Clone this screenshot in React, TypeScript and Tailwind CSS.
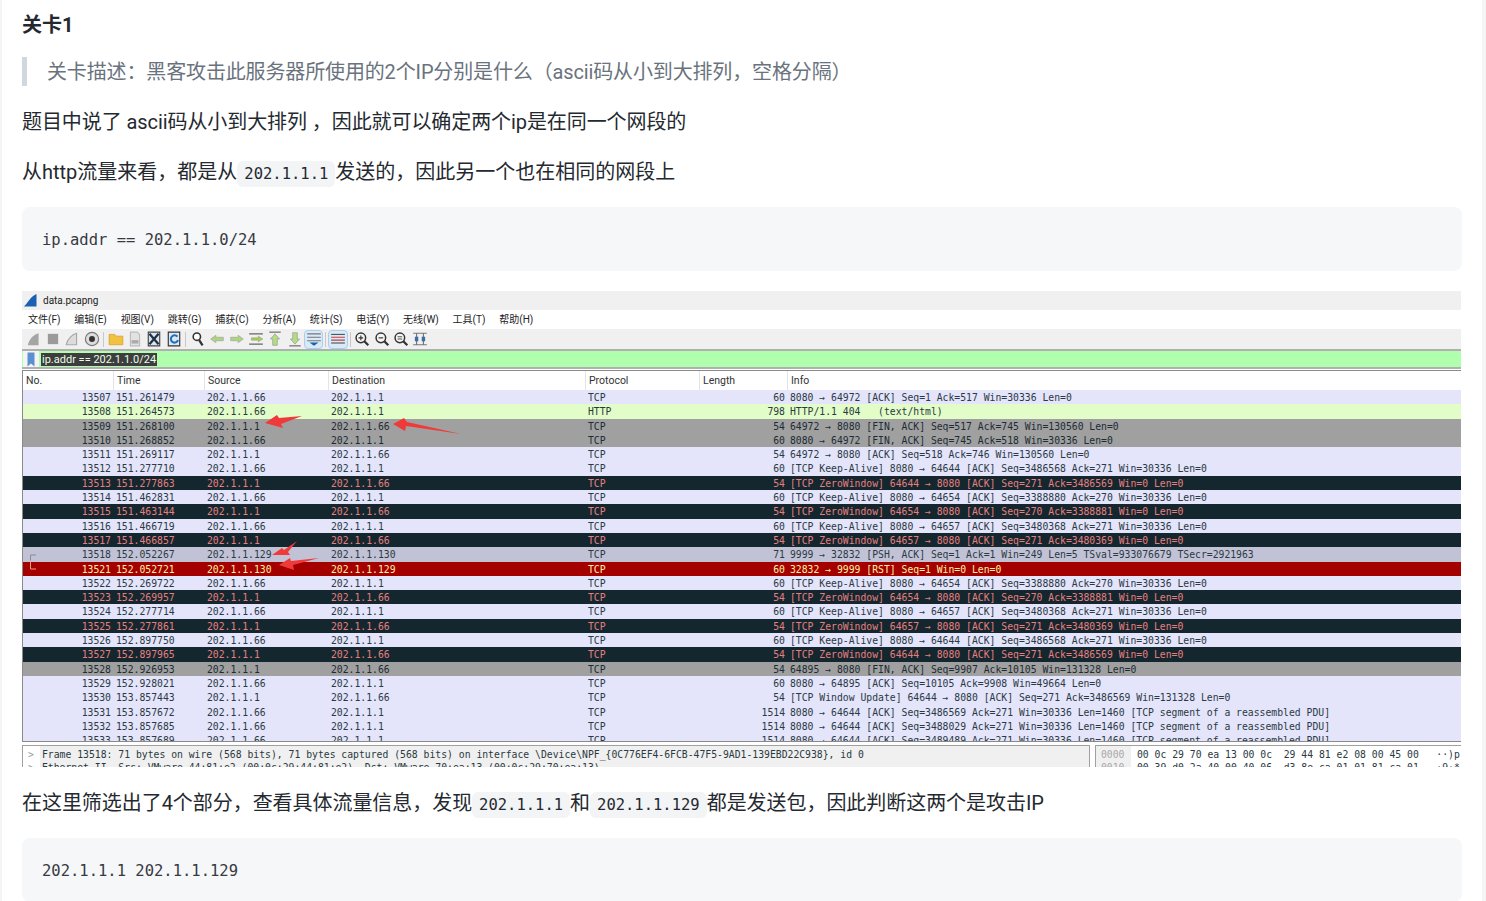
const cjk = "font-['Roboto','Noto_Sans_CJK_SC',sans-serif]";
const mono = "font-['DejaVu_Sans_Mono','Noto_Sans_CJK_SC',monospace]";

type RowKind = "tcp" | "http" | "fin" | "zero" | "sel" | "rst";
type Row = [number, string, string, string, string, number, string, RowKind];

const A = "202.1.1.66";
const B = "202.1.1.1";

const keep = (port: number, seq: number, ack: number) =>
  `[TCP Keep-Alive] 8080 → ${port} [ACK] Seq=${seq} Ack=${ack} Win=30336 Len=0`;
const zero = (port: number, seq: number, ack: number) =>
  `[TCP ZeroWindow] ${port} → 8080 [ACK] Seq=${seq} Ack=${ack} Win=0 Len=0`;
const seg = (seq: number) =>
  `8080 → 64644 [ACK] Seq=${seq} Ack=271 Win=30336 Len=1460 [TCP segment of a reassembled PDU]`;

const rows: Row[] = [
  [13507, "151.261479", A, B, "TCP", 60, "8080 → 64972 [ACK] Seq=1 Ack=517 Win=30336 Len=0", "tcp"],
  [13508, "151.264573", A, B, "HTTP", 798, "HTTP/1.1 404   (text/html)", "http"],
  [13509, "151.268100", B, A, "TCP", 54, "64972 → 8080 [FIN, ACK] Seq=517 Ack=745 Win=130560 Len=0", "fin"],
  [13510, "151.268852", A, B, "TCP", 60, "8080 → 64972 [FIN, ACK] Seq=745 Ack=518 Win=30336 Len=0", "fin"],
  [13511, "151.269117", B, A, "TCP", 54, "64972 → 8080 [ACK] Seq=518 Ack=746 Win=130560 Len=0", "tcp"],
  [13512, "151.277710", A, B, "TCP", 60, keep(64644, 3486568, 271), "tcp"],
  [13513, "151.277863", B, A, "TCP", 54, zero(64644, 271, 3486569), "zero"],
  [13514, "151.462831", A, B, "TCP", 60, keep(64654, 3388880, 270), "tcp"],
  [13515, "151.463144", B, A, "TCP", 54, zero(64654, 270, 3388881), "zero"],
  [13516, "151.466719", A, B, "TCP", 60, keep(64657, 3480368, 271), "tcp"],
  [13517, "151.466857", B, A, "TCP", 54, zero(64657, 271, 3480369), "zero"],
  [13518, "152.052267", "202.1.1.129", "202.1.1.130", "TCP", 71, "9999 → 32832 [PSH, ACK] Seq=1 Ack=1 Win=249 Len=5 TSval=933076679 TSecr=2921963", "sel"],
  [13521, "152.052721", "202.1.1.130", "202.1.1.129", "TCP", 60, "32832 → 9999 [RST] Seq=1 Win=0 Len=0", "rst"],
  [13522, "152.269722", A, B, "TCP", 60, keep(64654, 3388880, 270), "tcp"],
  [13523, "152.269957", B, A, "TCP", 54, zero(64654, 270, 3388881), "zero"],
  [13524, "152.277714", A, B, "TCP", 60, keep(64657, 3480368, 271), "tcp"],
  [13525, "152.277861", B, A, "TCP", 54, zero(64657, 271, 3480369), "zero"],
  [13526, "152.897750", A, B, "TCP", 60, keep(64644, 3486568, 271), "tcp"],
  [13527, "152.897965", B, A, "TCP", 54, zero(64644, 271, 3486569), "zero"],
  [13528, "152.926953", B, A, "TCP", 54, "64895 → 8080 [FIN, ACK] Seq=9907 Ack=10105 Win=131328 Len=0", "fin"],
  [13529, "152.928021", A, B, "TCP", 60, "8080 → 64895 [ACK] Seq=10105 Ack=9908 Win=49664 Len=0", "tcp"],
  [13530, "153.857443", B, A, "TCP", 54, "[TCP Window Update] 64644 → 8080 [ACK] Seq=271 Ack=3486569 Win=131328 Len=0", "tcp"],
  [13531, "153.857672", A, B, "TCP", 1514, seg(3486569), "tcp"],
  [13532, "153.857685", A, B, "TCP", 1514, seg(3488029), "tcp"],
  [13533, "153.857689", A, B, "TCP", 1514, seg(3489489), "tcp"],
];

const rowStyle: Record<RowKind, string> = {
  tcp: "bg-[#e4e4fb] text-[#2a3a42]",
  http: "bg-[#e2fdc8] text-[#2a3a42]",
  fin: "bg-[#a0a0a0] text-[#1c2c34]",
  zero: "bg-[#14272f] text-[#e77f7f]",
  sel: "bg-[#c2c2d6] text-[#2a3a42]",
  rst: "bg-[#a40000] text-[#fff3a0]",
};

const menus = ["文件(F)", "编辑(E)", "视图(V)", "跳转(G)", "捕获(C)", "分析(A)", "统计(S)", "电话(Y)", "无线(W)", "工具(T)", "帮助(H)"];

const InlineCode = ({ children }: { children: string }) => (
  <code className={`${mono} inline-block rounded-md bg-[#f3f4f6] px-[7px] text-[15.5px] leading-[26px] tracking-normal text-[#24292f]`}>
    {children}
  </code>
);

const CodeBlock = ({ children }: { children: string }) => (
  <pre className={`${mono} flex h-16 items-center rounded-lg bg-[#f6f7f9] px-5 pt-[3px] text-[15.5px] text-[#383a42]`}>{children}</pre>
);

const Icon = ({ children, active }: { children: React.ReactNode; active?: boolean }) => (
  <span className={`flex h-[19px] w-[19.3px] items-center justify-center ${active ? "rounded-sm border border-[#a6d0f0] bg-[#d8e9f7]" : ""}`}>
    <svg width="16" height="16" viewBox="0 0 14 14">{children}</svg>
  </span>
);

const Sep = () => <span className="mx-[2px] h-[15px] w-px bg-[#c8c8c8]" />;

const Toolbar = () => (
  <div className="flex h-5 items-center bg-[#f0f0f0] pl-[2px]">
    <Icon><path d="M1.5 12.5 C3 7 6 3.5 11 2 V12.5 Z" fill="#a5a5a5" /></Icon>
    <Icon><rect x="2.5" y="2.5" width="9" height="9" fill="#9a9a9a" /></Icon>
    <Icon><path d="M2 12 C3 7 7 3 11 2 V12 Z" fill="#dcdcdc" stroke="#a8a8a8" /></Icon>
    <Icon>
      <circle cx="7" cy="7" r="5.8" fill="#ddd" stroke="#777" />
      <circle cx="7" cy="7" r="2.6" fill="#333" />
    </Icon>
    <Sep />
    <Icon><path d="M1 3 H6 L7 4.5 H13 V12 H1 Z" fill="#f3c140" stroke="#d09a20" strokeWidth="0.6" /></Icon>
    <Icon>
      <path d="M3 1 H9 L11 3 V13 H3 Z" fill="#e2e2e2" stroke="#bbb" />
      <rect x="4" y="8" width="6" height="3" fill="#aaa" />
    </Icon>
    <Icon>
      <path d="M2 1 H12 V13 H2 Z" fill="#d9e4ee" stroke="#444" />
      <path d="M3 2.5 L11 11.5 M11 2.5 L3 11.5" stroke="#1c2f44" strokeWidth="2" />
    </Icon>
    <Icon>
      <path d="M2 1 H12 V13 H2 Z" fill="#dde8f3" stroke="#333" />
      <path d="M10 5 A3.2 3.2 0 1 0 10.5 8" fill="none" stroke="#1d6fc0" strokeWidth="1.8" />
    </Icon>
    <Sep />
    <Icon>
      <circle cx="6" cy="5" r="3.2" fill="#fff" stroke="#333" strokeWidth="1.4" />
      <path d="M8 8 L11 12.5" stroke="#333" strokeWidth="2" />
    </Icon>
    <Icon><path d="M1.5 7 L6 3.8 V5.5 H12.5 V8.5 H6 V10.2 Z" fill="#a8d878" stroke="#aaa" strokeWidth="0.7" /></Icon>
    <Icon><path d="M12.5 7 L8 3.8 V5.5 H1.5 V8.5 H8 V10.2 Z" fill="#a8d878" stroke="#aaa" strokeWidth="0.7" /></Icon>
    <Icon>
      <path d="M1 2.5 H13 M1 11.5 H13" stroke="#666" />
      <path d="M13 7 L9 4.5 V6 H3 V8 H9 V9.5 Z" fill="#a8d050" stroke="#888" strokeWidth="0.4" />
    </Icon>
    <Icon>
      <path d="M2 1 H12" stroke="#666" />
      <path d="M7 2.5 L11 7 H9 V12.5 H5 V7 H3 Z" fill="#b4dc80" stroke="#999" strokeWidth="0.6" />
    </Icon>
    <Icon>
      <path d="M2 13 H12" stroke="#666" />
      <path d="M7 11.5 L11 7 H9 V1.5 H5 V7 H3 Z" fill="#b4dc80" stroke="#999" strokeWidth="0.6" />
    </Icon>
    <Icon active>
      <path d="M1 2.5 H13 M1 5.5 H13 M1 8.5 H13" stroke="#777" />
      <path d="M3 10 H11 L7 13 Z" fill="#1f5fa8" />
    </Icon>
    <Sep />
    <Icon active>
      <path d="M1 3 H13" stroke="#555" />
      <path d="M1 5.5 H13 M1 8 H13" stroke="#c84040" />
      <path d="M1 10.5 H13" stroke="#555" />
    </Icon>
    <Sep />
    <Icon>
      <circle cx="6" cy="6" r="4.2" fill="#f4f4f4" stroke="#333" strokeWidth="1.3" />
      <path d="M4 6 H8 M6 4 V8" stroke="#333" />
      <path d="M9 9 L12.5 12.5" stroke="#333" strokeWidth="2" />
    </Icon>
    <Icon>
      <circle cx="6" cy="6" r="4.2" fill="#f4f4f4" stroke="#333" strokeWidth="1.3" />
      <path d="M4 6 H8" stroke="#333" />
      <path d="M9 9 L12.5 12.5" stroke="#333" strokeWidth="2" />
    </Icon>
    <Icon>
      <circle cx="6" cy="6" r="4.2" fill="#f4f4f4" stroke="#333" strokeWidth="1.3" />
      <path d="M4 5 H8 M4 7 H8" stroke="#555" />
      <path d="M9 9 L12.5 12.5" stroke="#333" strokeWidth="2" />
    </Icon>
    <Icon>
      <path d="M1 2 H13 M1 12 H13 M4 2 V12 M10 2 V12" stroke="#777" />
      <rect x="2.5" y="5" width="3" height="4" fill="#3a6ea5" />
      <rect x="8.5" y="5" width="3" height="4" fill="#3a6ea5" />
    </Icon>
  </div>
);

const gridCols = "grid grid-cols-[90px_91px_124px_257px_114px_88px_1fr]";

const PacketRow = ({ row }: { row: Row }) => {
  const [no, time, src, dst, proto, len, info, kind] = row;
  return (
    <div className={`${gridCols} h-[14.3px] overflow-hidden whitespace-pre text-[9.75px] leading-[15.5px] ${rowStyle[kind]}`}>
      <span className="pr-[2px] text-right">{no}</span>
      <span className="pl-[3px]">{time}</span>
      <span className="pl-[3px]">{src}</span>
      <span className="pl-[3px]">{dst}</span>
      <span className="pl-[3px]">{proto}</span>
      <span className="pr-[2px] text-right">{len}</span>
      <span className="pl-[3px]">{info}</span>
    </div>
  );
};

const Wireshark = () => (
  <div className={`${cjk} relative mr-px mt-5 h-[476px] overflow-hidden bg-white text-[10.5px] text-[#222]`}>
    <div className="flex h-[19px] items-center gap-[6px] bg-[#f0f0f0] pl-[2px] text-[10px]">
      <svg width="13" height="13" viewBox="0 0 13 13">
        <path d="M0 12.5 C3 10 6 3 12.5 0 V12.5 Z" fill="#1a5fb4" />
      </svg>
      <span>data.pcapng</span>
    </div>
    <div className="flex h-[19px] items-center gap-[13.8px] pl-[6px] text-[10px]">
      {menus.map((m) => (
        <span key={m}>{m}</span>
      ))}
    </div>
    <Toolbar />
    <div className="flex h-5 items-start border-y-2 border-[#b0b0b0] bg-[#afffaf]">
      <span className="ml-px flex h-[16px] w-[16px] items-center justify-center bg-[#f4f4f4]">
        <svg width="14" height="15" viewBox="0 0 16 16">
          <path d="M4 0 H12 V16 L8 12.5 L4 16 Z" fill="#5b8fd0" />
        </svg>
      </span>
      <span className="ml-[2px] mt-[2px] bg-[#3d3d3d] px-px text-[11px] leading-[13px] text-[#e8ffe8]">ip.addr == 202.1.1.0/24</span>
    </div>
    <div className="mt-px border-b border-l border-t border-[#8a8a8a]">
      <div className={`${gridCols} h-[19px] items-center bg-white text-[10.5px] text-[#333]`}>
        {["No.", "Time", "Source", "Destination", "Protocol", "Length", "Info"].map((h, i) => (
          <span key={h} className={`flex h-full items-center pl-[3px] ${i > 0 ? "border-l border-[#e4e4e4]" : ""}`}>
            {h}
          </span>
        ))}
      </div>
      <div className={`${mono} h-[351px] overflow-hidden`}>
        {rows.map((r) => (
          <PacketRow key={r[0]} row={r} />
        ))}
      </div>
    </div>
    <div className={`${mono} mt-[3px] flex h-[30px] gap-[5px] whitespace-pre text-[9.75px] leading-[13px] text-[#2a3a42]`}>
      <div className="flex w-[1068px] overflow-hidden border border-[#a0a0a0]">
        <div className="w-[17px] pl-[5px] pt-[2px] text-[#999]">
          <div>{">"}</div>
          <div>{">"}</div>
        </div>
        <div className="flex-1 bg-[#f0f0f0] pl-[2px] pt-[2px]">
          <div>Frame 13518: 71 bytes on wire (568 bits), 71 bytes captured (568 bits) on interface \Device\NPF_{"{"}0C776EF4-6FCB-47F5-9AD1-139EBD22C938{"}"}, id 0</div>
          <div>Ethernet II, Src: VMware_44:81:e2 (00:0c:29:44:81:e2), Dst: VMware_70:ea:13 (00:0c:29:70:ea:13)</div>
        </div>
      </div>
      <div className="flex min-w-0 flex-1 overflow-hidden border-l border-t border-[#a0a0a0]">
        <div className="w-[35px] bg-[#f0f0f0] pl-[5px] pt-[2px] text-[#a8a8a8]">
          <div>0000</div>
          <div>0010</div>
        </div>
        <div className="pl-[6px] pt-[2px]">
          <div>00 0c 29 70 ea 13 00 0c  29 44 81 e2 08 00 45 00   ··)p</div>
          <div>00 39 d0 2a 40 00 40 06  d3 8e ca 01 01 81 ca 01   ·9·*</div>
        </div>
      </div>
    </div>
    {/* hand drawn red arrows and the conversation bracket, on top of the capture */}
    <svg viewBox="22 291 1439 476" className="absolute inset-0 h-full w-full">
      <polygon points="265,423 277,415 279,418 302,416 281,424 283,428" fill="#f03a3a" />
      <polygon points="393,424 404,418 407,422 461,434 406,426 405,431" fill="#f03a3a" />
      <polygon points="272,555 282,548 284,550 297,541 288,552 290,555" fill="#f03a3a" />
      <polygon points="279,565 290,558 291,561 319,558 293,565 294,570" fill="#f03a3a" />
      <path d="M36 555 H30.5 V569" fill="none" stroke="#8a8a9a" />
      <path d="M30.5 560 V569 H36" fill="none" stroke="#e8a080" />
    </svg>
  </div>
);

export default function App() {
  return (
    <div className={`${cjk} flex h-[901px] overflow-hidden border-l-2 border-[#f5f5f5] bg-white text-[20px] text-[#24292f]`}>
      <main className="min-w-0 flex-1 pl-5 pr-5">
        <h3 className="pt-[10px] text-[20px] font-bold leading-[30px]">关卡1</h3>
        <blockquote className="mt-[17px] flex h-[29px] items-center border-l-[5px] border-[#d0d7de] pl-5 tracking-[-0.14px] text-[#6a737d]">
          关卡描述：黑客攻击此服务器所使用的2个IP分别是什么（ascii码从小到大排列，空格分隔）
        </blockquote>
        <p className="mt-5 pt-px leading-[30px] tracking-[-0.08px]">题目中说了 ascii码从小到大排列 ，因此就可以确定两个ip是在同一个网段的</p>
        <p className="mt-[19px] pt-px leading-[30px]">
          从http流量来看，都是从<InlineCode>202.1.1.1</InlineCode>发送的，因此另一个也在相同的网段上
        </p>
        <div className="mt-[20px]">
          <CodeBlock>ip.addr == 202.1.1.0/24</CodeBlock>
        </div>
        <Wireshark />
        <p className="mt-[21px] leading-[30px] tracking-[-0.05px]">
          在这里筛选出了4个部分，查看具体流量信息，发现<InlineCode>202.1.1.1</InlineCode>和<InlineCode>202.1.1.129</InlineCode>都是发送包，因此判断这两个是攻击IP
        </p>
        <div className="mt-5">
          <CodeBlock>202.1.1.1 202.1.1.129</CodeBlock>
        </div>
      </main>
      <div className="w-1 bg-[#f5f5f5]" />
    </div>
  );
}
